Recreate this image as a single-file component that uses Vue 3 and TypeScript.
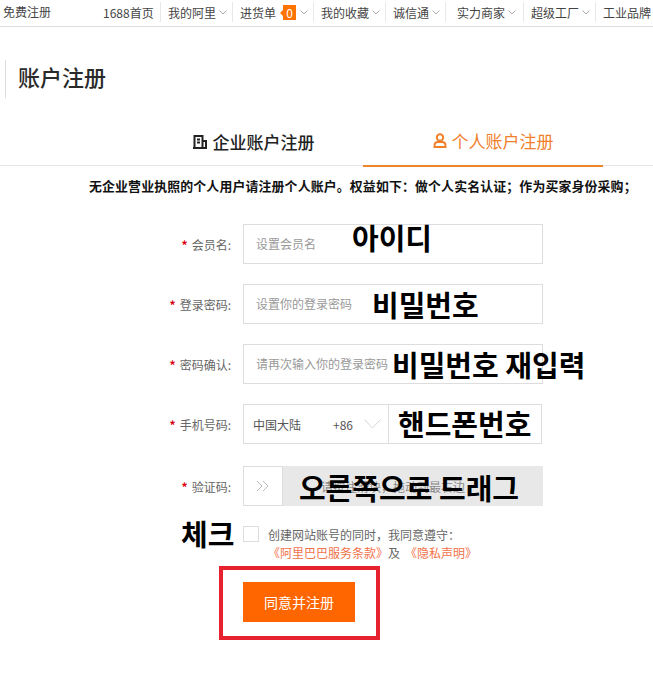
<script setup lang="ts">
interface NavItem { text: string; chevron: boolean; width: number; badge?: string; pad?: boolean }
const navItems: NavItem[] = [
  { text: '1688首页', chevron: false, width: 65 },
  { text: '我的阿里', chevron: true, width: 72 },
  { text: '进货单', chevron: true, width: 81, badge: '0' },
  { text: '我的收藏', chevron: true, width: 72 },
  { text: '诚信通', chevron: true, width: 60 },
  { text: '实力商家', chevron: true, width: 78, pad: true },
  { text: '超级工厂', chevron: true, width: 72 },
  { text: '工业品牌', chevron: false, width: 57 },
]
const plainRows = [
  { label: '会员名:', placeholder: '设置会员名', note: '아이디', cls: 'n1' },
  { label: '登录密码:', placeholder: '设置你的登录密码', note: '비밀번호', cls: 'n2' },
  { label: '密码确认:', placeholder: '请再次输入你的登录密码', note: '비밀번호 재입력', cls: 'n3' },
]
</script>

<template>
  <div class="page">
    <header class="topbar">
      <span class="reg">免费注册</span>
      <nav class="nav">
        <span v-for="item in navItems" :key="item.text" class="nav-item" :class="{ pad: item.pad }" :style="{ width: item.width + 'px' }">
          {{ item.text }}
          <span v-if="item.badge" class="badge">{{ item.badge }}</span>
          <svg v-if="item.chevron" class="chev" width="8" height="5" viewBox="0 0 8 5"><path d="M.5.5 4 4 7.5.5" fill="none" stroke="#aaa" stroke-width="1" /></svg>
        </span>
      </nav>
    </header>

    <div class="title-wrap"><h1 class="title">账户注册</h1></div>

    <div class="tabs">
      <div class="tab">
        <svg width="16" height="15" viewBox="0 0 16 15"><path d="M2.500 14V2h8v12M5 5.500h3M5 8.500h3M10.500 7H14v7M1 14h14" fill="none" stroke="#222" stroke-width="2" /></svg>
        企业账户注册
      </div>
      <div class="tab active">
        <svg width="14" height="15" viewBox="0 0 14 15"><circle cx="7" cy="4.500" r="3.200" fill="none" stroke="#f0802c" stroke-width="2" /><path d="M1.500 14v-1.500c0-2 1.500-3.500 3.500-3.500h4c2 0 3.500 1.500 3.500 3.500V14z" fill="none" stroke="#f0802c" stroke-width="2" /></svg>
        个人账户注册
      </div>
    </div>

    <p class="notice">无企业营业执照的个人用户请注册个人账户。权益如下：做个人实名认证；作为买家身份采购；</p>

    <form class="form" @submit.prevent>
      <div v-for="row in plainRows" :key="row.label" class="row">
        <label class="label"><i>*</i>{{ row.label }}</label>
        <div class="box">
          <span class="ph">{{ row.placeholder }}</span>
          <span class="note" :class="row.cls">{{ row.note }}</span>
        </div>
      </div>

      <div class="row phone-row">
        <label class="label"><i>*</i>手机号码:</label>
        <div class="box phone">
          <div class="area">
            <span class="country">中国大陆</span>
            <span class="code">+86</span>
            <svg width="17" height="10" viewBox="0 0 17 10"><path d="M.500.500 8.500 9 16.500.500" fill="none" stroke="#d5d5d5" stroke-width="1" /></svg>
          </div>
          <span class="note n4">핸드폰번호</span>
        </div>
      </div>

      <div class="row slide-row">
        <label class="label"><i>*</i>验证码:</label>
        <div class="slider">
          <span class="slide-text">请按住滑块，拖动到最右边</span>
          <div class="handle">
            <svg width="14" height="12" viewBox="0 0 14 12"><path d="M1 1l5 5-5 5M7 1l5 5-5 5" fill="none" stroke="#bbb" stroke-width="1" /></svg>
          </div>
          <span class="note n5">오른쪽으로 드래그</span>
        </div>
      </div>

      <div class="agree">
        <span class="note n6">체크</span>
        <span class="check"></span>
        <div class="agree-text">
          <div>创建网站账号的同时，我同意遵守：</div>
          <div class="links"><a>《阿里巴巴服务条款》</a><span class="and">及</span><a>《隐私声明》</a></div>
        </div>
      </div>

      <div class="submit-wrap">
        <button class="submit" type="submit">同意并注册</button>
      </div>
    </form>
  </div>
</template>

<style scoped>
.page {
  width: 653px;
  height: 678px;
  overflow: hidden;
  background: #fff;
  font-family: "Noto Sans CJK SC", "Liberation Sans", sans-serif;
  color: #555;
  font-size: 12px;
}
.topbar {
  height: 26px;
  box-sizing: content-box;
  border-bottom: 1px solid #ddd;
  display: flex;
  align-items: flex-start;
  padding-left: 3px;
  white-space: nowrap;
  color: #444;
}
.reg { line-height: 24px; }
.nav { display: flex; align-items: flex-start; margin-left: 45px; padding-top: 2px; }
.nav-item {
  display: flex;
  align-items: center;
  height: 20px;
  box-sizing: border-box;
  flex: none;
  padding-left: 7px;
  border-right: 1px solid #e8e8e8;
}
.nav-item:last-child { border-right: 0; }
.nav-item.pad { padding-left: 11px; }
.chev { margin-left: 3px; }
.badge {
  position: relative;
  width: 13px;
  height: 15px;
  margin-left: 7px;
  margin-right: 1px;
  background: #ff7300;
  color: #fff;
  line-height: 15px;
  text-align: center;
}
.badge::before {
  content: "";
  position: absolute;
  left: -3px;
  top: 5px;
  border: 3px solid transparent;
  border-left: 0;
  border-right-color: #ff7300;
}
.title-wrap { padding: 33px 0 0 5px; }
.title {
  margin: 0;
  height: 38px;
  border-left: 1px solid #ddd;
  padding-left: 12px;
  font-size: 22px;
  font-weight: 500;
  line-height: 33px;
  color: #2a2a2a;
}
.tabs {
  margin-top: 24px;
  height: 43px;
  border-bottom: 1px solid #e5e5e5;
  display: flex;
  padding-left: 123px;
  box-sizing: content-box;
}
.tab {
  width: 240px;
  display: flex;
  align-items: center;
  justify-content: center;
  gap: 5px;
  font-size: 17px;
  font-weight: 500;
  color: #222;
  height: 43px;
  box-sizing: border-box;
  padding: 0 0 4px 20px;
}
.tab.active {
  position: relative;
  color: #f0802c;
  border-bottom: 2px solid #ee8528;
  height: 45px;
  font-weight: 400;
  padding-bottom: 6px;
}
.notice {
  margin: 11px 0 0 89px;
  font-size: 12.900px;
  letter-spacing: 0.150px;
  line-height: 18px;
  font-weight: 700;
  color: #111;
  white-space: nowrap;
}
.form { margin-top: 29px; }
.row {
  display: flex;
  align-items: center;
  height: 40px;
  margin-bottom: 20px;
}
.phone-row { margin-bottom: 22px; }
.label {
  width: 231px;
  text-align: right;
  color: #666;
  flex: none;
  margin-right: 12px;
}
.label i {
  font-style: normal;
  color: #d7000f;
  margin-right: 4px;
  font-weight: 700;
}
.box {
  position: relative;
  width: 300px;
  height: 40px;
  box-sizing: border-box;
  border: 1px solid #ddd;
  display: flex;
  align-items: center;
}
.ph { padding: 0 0 2px 12px; color: #999; }
.note {
  position: absolute;
  font-family: "Noto Sans CJK KR", "Noto Sans CJK SC", sans-serif;
  font-size: 29px;
  font-weight: 700;
  line-height: 36px;
  color: #000;
  white-space: nowrap;
}
.n1 { left: 108px; top: -6px; }
.n2 { left: 128px; top: 1px; }
.n3 { left: 148px; top: 1px; }
.n4 { left: 154px; top: 0; }
.n5 { left: 56px; top: 3px; }
.n6 { left: -62px; top: -11px; }
.phone { width: 299px; }
.area {
  width: 145px;
  height: 38px;
  box-sizing: border-box;
  border-right: 1px solid #ddd;
  display: flex;
  align-items: center;
  padding-left: 9px;
  color: #555;
}
.country { width: 80px; }
.code { width: 31px; }
.slider {
  position: relative;
  width: 300px;
  height: 40px;
  background: #e8e8e8;
  display: flex;
  align-items: center;
}
.handle {
  position: relative;
  width: 40px;
  height: 40px;
  box-sizing: border-box;
  background: #fff;
  border: 1px solid #ddd;
  display: flex;
  align-items: center;
  justify-content: center;
  flex: none;
}
.slide-text { position: absolute; left: 0; right: 0; text-align: center; color: #888; }
.agree {
  position: relative;
  margin-left: 243px;
  display: flex;
}
.check {
  width: 16px;
  height: 16px;
  box-sizing: border-box;
  border: 1px solid #ddd;
  flex: none;
}
.agree-text {
  margin-left: 9px;
  line-height: 18px;
  color: #666;
  white-space: nowrap;
}
.links a { color: #f2724a; }
.and { margin: 0 5px 0 0; }
.submit-wrap {
  margin: 4px 0 0 219px;
  width: 161px;
  height: 74px;
  box-sizing: border-box;
  border: 4px solid #e8212e;
  padding: 12px 0 0 20px;
}
.submit {
  display: block;
  width: 112px;
  height: 40px;
  border: 0;
  padding: 0;
  background: #ff6600;
  color: #fff;
  font-family: inherit;
  font-size: 14px;
}
</style>
